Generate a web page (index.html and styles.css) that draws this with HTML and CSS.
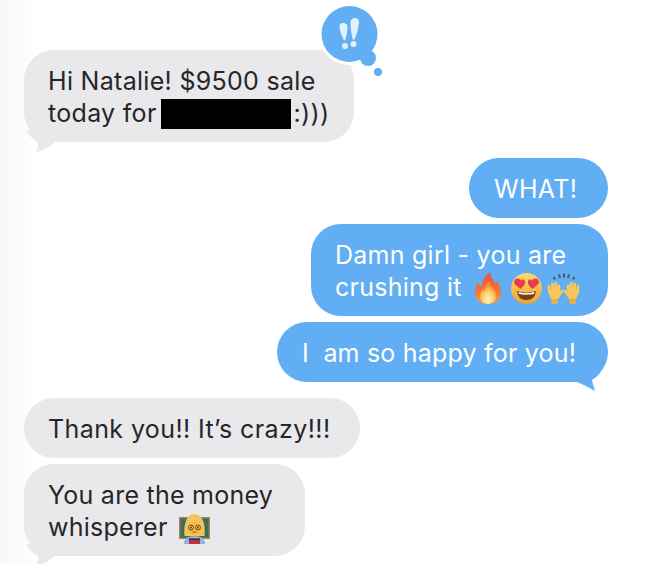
FILE: index.html
```html
<!DOCTYPE html>
<html lang="en">
<head>
    <meta charset="UTF-8">
    <title>Messages</title>
    <link rel="stylesheet" href="styles.css">
</head>
<body>
    <div id="thread">
        <div class="bubble in sale">
            <svg class="reaction" width="64" height="80" viewBox="0 0 64 80">
                <circle cx="29.500" cy="34" r="31" fill="#fff"/>
                <circle cx="29.500" cy="34" r="28" fill="#61aef4"/>
                <circle cx="48" cy="58" r="8" fill="#61aef4"/>
                <circle cx="58" cy="72" r="4" fill="#61aef4"/>
                <path d="M19.500 27 Q19 23 23 23 Q27.500 23 27.500 27 Q27.500 33 25.500 39.500 Q24.500 41.500 23.500 39.500 Q20 33 19.500 27Z" fill="#e2f0fc"/>
                <path d="M30.500 23 Q30.500 18 35 18 Q39.500 18.500 39 23 Q38 31 35 38.500 Q33.500 41 32.500 38.500 Q30.500 31 30.500 23Z" fill="#e2f0fc"/>
                <circle cx="25" cy="46" r="3" fill="#e2f0fc"/>
                <circle cx="33.500" cy="44" r="3" fill="#e2f0fc"/>
            </svg>
            Hi Natalie! $9500 sale<br>today for<span class="redacted"></span>:)))
            <svg class="tail tail-in" width="32" height="24" viewBox="0 0 32 24"><path d="M0 0 Q5 9 12 12 Q12.500 18 10 22 Q20 20 29 12 L29 0Z" fill="#e9e9eb"/></svg>
        </div>

        <div class="bubble out gap what">WHAT!</div>
        <div class="bubble out damn">
            Damn girl - you are<br>crushing it<span class="emojis">
                <svg class="fire" width="26" height="32" viewBox="0 0 26 32">
                    <defs>
                        <linearGradient id="flame" x1="0" y1="0" x2="0" y2="1">
                            <stop offset="0" stop-color="#ee4f35"/>
                            <stop offset="0.6" stop-color="#f5743a"/>
                            <stop offset="1" stop-color="#f9a13f"/>
                        </linearGradient>
                        <radialGradient id="glow" cx="0.5" cy="0.8" r="0.6">
                            <stop offset="0" stop-color="#fff6c9"/>
                            <stop offset="0.5" stop-color="#fdd36a"/>
                            <stop offset="1" stop-color="#f9923d"/>
                        </radialGradient>
                    </defs>
                    <path d="M15 0 Q16 6 20 11 Q21 12 22 9 Q26 15 26 21 Q25 32 13 32 Q1 32 0 21 Q0 15 3 10 Q4 14 7 14 Q6 7 15 0Z" fill="url(#flame)"/>
                    <path d="M14 9 Q15 14 19 18 Q23 23 20 28 Q17 32 13 32 Q7 32 5 27 Q4 21 8 17 Q9 19 10 19 Q10 13 14 9Z" fill="url(#glow)"/>
                </svg>
                <svg width="31" height="31" viewBox="0 0 31 31">
                    <defs>
                        <linearGradient id="face" x1="0" y1="0" x2="0" y2="1">
                            <stop offset="0" stop-color="#fbd96f"/>
                            <stop offset="1" stop-color="#eea22f"/>
                        </linearGradient>
                    </defs>
                    <circle cx="15.500" cy="15.500" r="15.500" fill="url(#face)"/>
                    <path d="M6 18 Q15.500 21.500 25 18 Q24 27 15.500 27 Q7 27 6 18Z" fill="#6e4216"/>
                    <path d="M7.500 19 Q15.500 21.500 23.500 19 L23 21 Q15.500 22.500 8 21Z" fill="#fff"/>
                    <path d="M9.500 16 L3.500 11 Q2 6.500 6 5.500 Q8.500 5 10 7.500 Q12.500 5.500 14 8 Q15 10.500 13 12.500Z" fill="#e73d49"/>
                    <path d="M21.500 16 L27.500 11 Q29 6.500 25 5.500 Q22.500 5 21 7.500 Q18.500 5.500 17 8 Q16 10.500 18 12.500Z" fill="#e73d49"/>
                </svg>
                <svg width="33" height="32" viewBox="0 0 33 32">
                    <g stroke="#f6c65a" stroke-width="3" stroke-linecap="round" fill="#f6c65a">
                        <path d="M2.500 21 L2 14.500 M5.500 19 L5.500 12 M8.700 19 L8.800 11.500 M11.500 20 L11.800 14 M11 24 L15 19" fill="none"/>
                        <path d="M2.500 19 H12 V25 L10.500 27 H4.500 Q2.500 24 2.500 19Z" stroke-width="1"/>
                    </g>
                    <g stroke="#f6c65a" stroke-width="3" stroke-linecap="round" fill="#f6c65a" transform="translate(33,0) scale(-1,1)">
                        <path d="M2.500 21 L2 14.500 M5.500 19 L5.500 12 M8.700 19 L8.800 11.500 M11.500 20 L11.800 14 M11 24 L15 19" fill="none"/>
                        <path d="M2.500 19 H12 V25 L10.500 27 H4.500 Q2.500 24 2.500 19Z" stroke-width="1"/>
                    </g>
                    <rect x="4.500" y="27" width="6" height="5" fill="#e9b041"/>
                    <rect x="22.500" y="27" width="6" height="5" fill="#e9b041"/>
                    <path d="M6.500 5 L8 7.500 M12 2.500 L13 6 M17 1.500 L17 5.500 M22 2.500 L21 6 M27.500 5 L26 7.500" stroke="#4c5663" stroke-width="2"/>
                </svg>
            </span>
        </div>
        <div class="bubble out happy">
            I&nbsp; am so happy for you!
            <svg class="tail tail-out" width="32" height="24" viewBox="0 0 32 24"><path d="M1 12 Q11 16 19 21 Q17 15 16 10 Q21 7 25 2 L1 0Z" fill="#61aef4"/></svg>
        </div>

        <div class="bubble in gap thanks">Thank you!! It’s crazy!!!</div>
        <div class="bubble in money">
            You are the money<br>whisperer<span class="emojis teacher">
                <svg width="31" height="30" viewBox="0 0 31 30">
                    <rect x="0" y="3" width="31" height="22" fill="#a5825f"/>
                    <rect x="1.500" y="4.500" width="28" height="19" fill="#3f6b55"/>
                    <path d="M5.500 22 Q4 1 15.500 0 Q27 1 25.500 22Z" fill="#efc65c"/>
                    <circle cx="15.500" cy="14" r="7" fill="#f5b93f"/>
                    <path d="M8.500 12 Q12 10 15.500 7 Q19 10.500 22.500 12 L22 6 L9 6Z" fill="#efc65c"/>
                    <circle cx="12" cy="13.500" r="2.400" fill="#f8cf6a" stroke="#6a3f1f"/>
                    <circle cx="19" cy="13.500" r="2.400" fill="#f8cf6a" stroke="#6a3f1f"/>
                    <circle cx="12" cy="13.500" r="0.900" fill="#4a2c14"/>
                    <circle cx="19" cy="13.500" r="0.900" fill="#4a2c14"/>
                    <path d="M13.500 18 H17.500" stroke="#a0522d"/>
                    <path d="M5 30 Q5 22 15.500 22 Q26 22 26 30Z" fill="#8db6de"/>
                    <rect x="10" y="24.500" width="11" height="5.500" fill="#b9333f"/>
                    <rect x="10" y="24.500" width="11" height="1.500" fill="#33343c"/>
                </svg>
            </span>
            <svg class="tail tail-in" width="32" height="24" viewBox="0 0 32 24"><path d="M0 0 Q5 9 12 12 Q12.500 18 10 22 Q20 20 29 12 L29 0Z" fill="#e9e9eb"/></svg>
        </div>
    </div>
</body>
</html>
```

FILE: styles.css
```css
html, body {
    margin: 0;
    height: 100%;
}

body {
    background: linear-gradient(to right, #f8f8f8, #fff 40px);
    font-family: Inter, "Liberation Sans", sans-serif;
    overflow: hidden;
}

#thread {
    display: flex;
    flex-direction: column;
    gap: 6px;
    padding: 50px 52px 0 24px;
}

.bubble {
    position: relative;
    box-sizing: border-box;
    height: 92px;
    padding: 15px 0 13px 24px;
    border-radius: 30px;
    font-size: 25px;
    line-height: 32px;
    letter-spacing: 0.3px;
    white-space: nowrap;
}

.in {
    align-self: flex-start;
    background: #e9e9eb;
    color: #26262a;
}

.out {
    align-self: flex-end;
    background: #61aef4;
    color: #fff;
    padding-left: 25px;
}

.gap {
    margin-top: 10px;
}

.sale { width: 330px; }
.what { width: 139px; height: 60px; }
.damn { width: 297px; padding-left: 24px; letter-spacing: 0.25px; }
.happy { width: 331px; height: 60px; letter-spacing: 0.2px; }
.thanks { width: 336px; height: 60px; letter-spacing: 0.4px; }
.money { width: 281px; letter-spacing: 0.25px; }

.redacted {
    display: inline-block;
    width: 130px;
    height: 30px;
    margin: 0 3px 0 4px;
    background: #000;
    vertical-align: -7px;
}

.reaction {
    position: absolute;
    left: 296px;
    top: -50px;
}

.tail {
    position: absolute;
    bottom: -12px;
}

.tail-in {
    left: 2px;
}

.tail-out {
    right: 0;
}

.emojis {
    display: inline-flex;
    align-items: flex-end;
    gap: 5px;
    height: 24px;
    margin-left: 13px;
    vertical-align: -8px;
}

.fire {
    margin-right: 5px;
}

.teacher {
    margin-left: 11px;
}
```
